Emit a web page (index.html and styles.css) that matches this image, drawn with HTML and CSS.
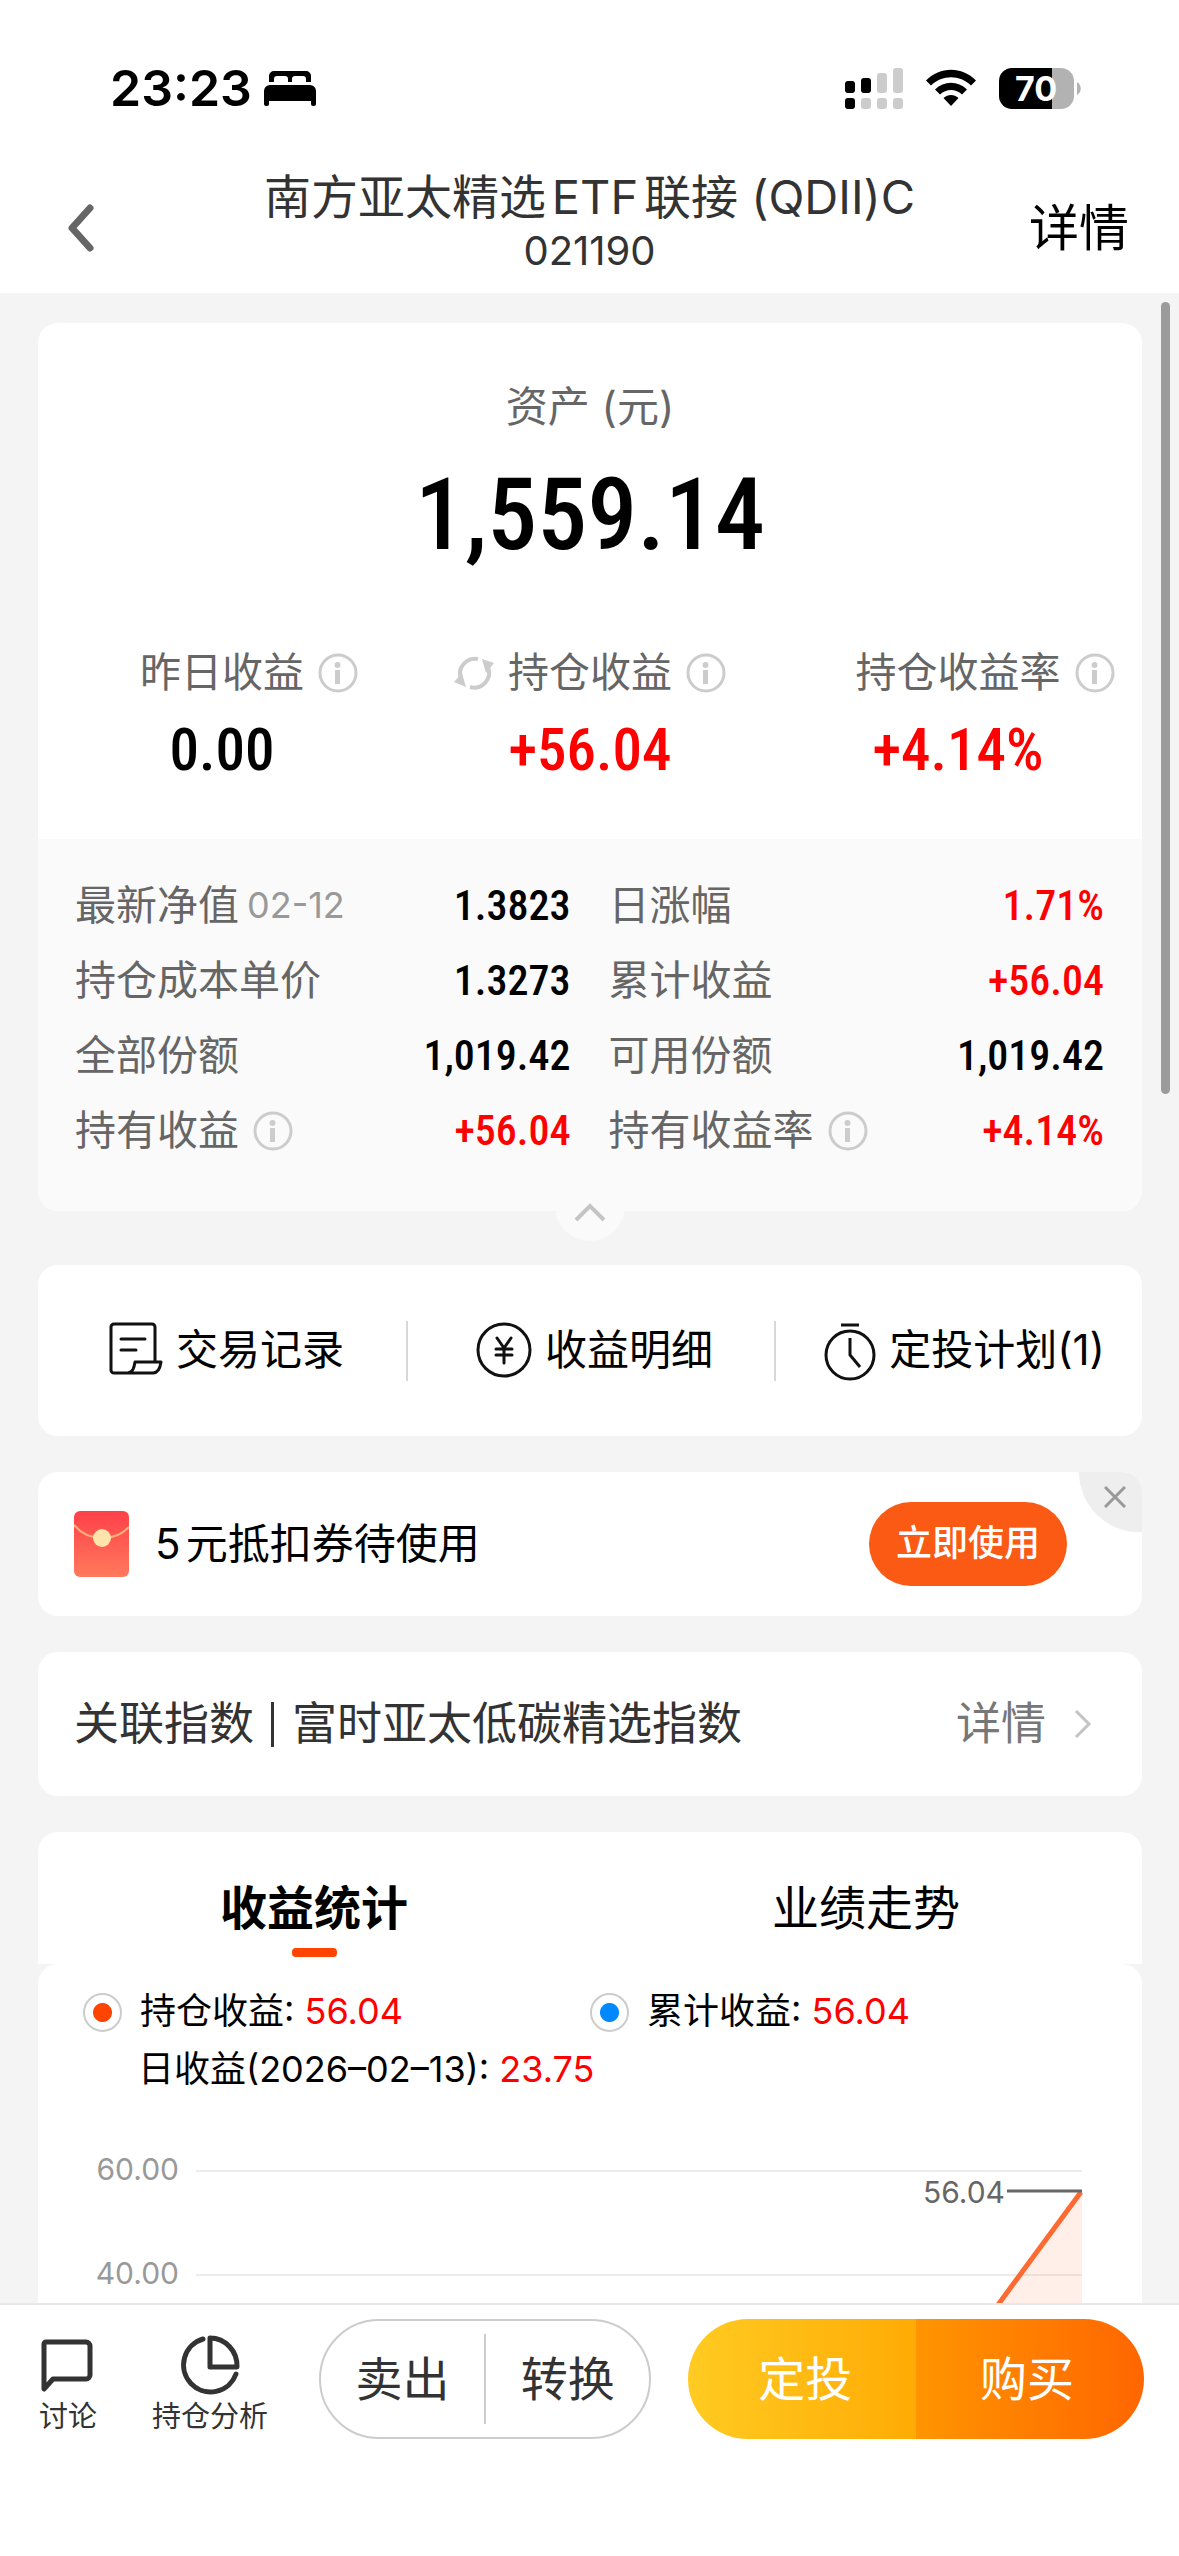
FILE: index.html
```html
<!DOCTYPE html>
<html lang="zh-CN">
<head>
<meta charset="utf-8">
<meta name="viewport" content="width=device-width, initial-scale=1">
<title>南方亚太精选ETF联接(QDII)C</title>
<link rel="stylesheet" href="styles.css">
</head>
<body>
<svg class="defs" aria-hidden="true">
  <symbol id="info" viewBox="0 0 40 40">
    <circle cx="20" cy="20" r="18" fill="none" stroke="#ccc" stroke-width="3"/>
    <rect x="17" y="17" width="5" height="14" fill="#ccc"/>
    <circle cx="19.500" cy="12" r="3" fill="#ccc"/>
  </symbol>
</svg>

<div class="status">
  <div class="status-time">
    <span>23:23</span>
    <svg width="52" height="36" viewBox="0 0 52 36" aria-hidden="true">
      <path d="M5 12V6a5 5 0 0 1 5-5h32a5 5 0 0 1 5 5v6h-5V9a3 3 0 0 0-3-3H31a3 3 0 0 0-3 3v3h-4V9a3 3 0 0 0-3-3h-8a3 3 0 0 0-3 3v3z"/>
      <path d="M0 21a6 6 0 0 1 6-6h40a6 6 0 0 1 6 6v13a2 2 0 0 1-2 2h-1a2 2 0 0 1-2-2v-3H5v3a2 2 0 0 1-2 2H2a2 2 0 0 1-2-2z"/>
    </svg>
  </div>
  <div class="status-icons">
    <svg width="58" height="41" viewBox="0 0 58 41" aria-hidden="true">
      <rect x="0" y="13" width="10" height="12" rx="3"/>
      <rect x="16" y="10" width="10" height="15" rx="3"/>
      <g fill="#ccc">
        <rect x="32" y="5" width="10" height="20" rx="3"/>
        <rect x="48" y="0" width="10" height="25" rx="3"/>
        <rect x="16" y="30" width="10" height="11" rx="3"/>
        <rect x="32" y="30" width="10" height="11" rx="3"/>
        <rect x="48" y="30" width="10" height="11" rx="3"/>
      </g>
      <rect x="0" y="30" width="10" height="11" rx="3"/>
    </svg>
    <svg width="52" height="38" viewBox="0 0 52 38" aria-hidden="true">
      <path d="M1 11.500C15-3 37-3 51 11.500l-5 5C35 5.500 17 5.500 6 16.500z"/>
      <path d="M10 20.500c9-9 23-9 32 0l-5 5c-6-6-16-6-22 0z"/>
      <path d="M18.500 29c4.500-4 10.500-4 15 0L26 37z"/>
    </svg>
    <svg width="82" height="41" viewBox="0 0 82 41" aria-label="电量 70">
      <path d="M53 0h9a13 13 0 0 1 13 13v15a13 13 0 0 1-13 13h-9z" fill="#b2b2b2"/>
      <path d="M13 0h40v41H13A13 13 0 0 1 0 28V13A13 13 0 0 1 13 0z"/>
      <path d="M78 14c5 3 5 10 0 13z" fill="#b2b2b2"/>
      <text class="battery-text" x="37" y="33" text-anchor="middle">70</text>
    </svg>
  </div>
</div>

<header class="header">
  <button class="back" aria-label="返回">
    <svg width="30" height="52" viewBox="0 0 30 52" fill="none" stroke="#666" stroke-width="7" stroke-linecap="round" stroke-linejoin="round" aria-hidden="true"><path d="M24 6 6 26l18 20"/></svg>
  </button>
  <div class="header-title">
    <h1>南方亚太精选ETF联接 (QDII)C</h1>
    <p>021190</p>
  </div>
  <a class="header-link" href="#detail">详情</a>
</header>

<main class="content">
  <section class="card assets">
    <div class="assets-top">
      <p class="assets-label">资产 (元)</p>
      <p class="assets-total">1,559.14</p>
      <div class="stats">
        <div class="stat">
          <div class="stat-label"><span></span><span>昨日收益</span><svg class="info" aria-hidden="true"><use href="#info"/></svg></div>
          <div class="stat-value">0.00</div>
        </div>
        <div class="stat">
          <div class="stat-label">
            <svg class="info swap" viewBox="0 0 40 40" aria-hidden="true">
              <g fill="none" stroke="#ccc" stroke-width="4">
                <path d="M7 26A15 15 0 0 1 24 6"/>
                <path d="M34 14A15 15 0 0 1 16 34"/>
              </g>
              <path d="M28 6l12 4-8 10zM12 34 0 29l8-9z" fill="#ccc"/>
            </svg>
            <span>持仓收益</span><svg class="info" aria-hidden="true"><use href="#info"/></svg>
          </div>
          <div class="stat-value up">+56.04</div>
        </div>
        <div class="stat">
          <div class="stat-label"><span></span><span>持仓收益率</span><svg class="info" aria-hidden="true"><use href="#info"/></svg></div>
          <div class="stat-value up">+4.14%</div>
        </div>
      </div>
    </div>
    <dl class="details">
      <div class="detail"><dt>最新净值<small>02-12</small></dt><dd>1.3823</dd></div>
      <div class="detail"><dt>日涨幅</dt><dd class="up">1.71%</dd></div>
      <div class="detail"><dt>持仓成本单价</dt><dd>1.3273</dd></div>
      <div class="detail"><dt>累计收益</dt><dd class="up">+56.04</dd></div>
      <div class="detail"><dt>全部份额</dt><dd>1,019.42</dd></div>
      <div class="detail"><dt>可用份额</dt><dd>1,019.42</dd></div>
      <div class="detail"><dt>持有收益<svg class="info" aria-hidden="true"><use href="#info"/></svg></dt><dd class="up">+56.04</dd></div>
      <div class="detail"><dt>持有收益率<svg class="info" aria-hidden="true"><use href="#info"/></svg></dt><dd class="up">+4.14%</dd></div>
    </dl>
    <button class="collapse" aria-label="收起">
      <svg width="32" height="20" viewBox="0 0 32 20" fill="none" stroke="#c4c4c4" stroke-width="4" aria-hidden="true"><path d="M2 18 16 4l14 14"/></svg>
    </button>
  </section>

  <nav class="card actions">
    <a href="#records">
      <svg width="66" height="66" viewBox="0 0 66 66" fill="none" stroke="#111" stroke-width="3" stroke-linejoin="round" stroke-linecap="round" aria-hidden="true">
        <path d="M55 44V9a3 3 0 0 0-3-3H14a3 3 0 0 0-3 3v43a3 3 0 0 0 3 3h39c5 0 7-4 8-11H35c-1 6-2 10-7 11"/>
        <path d="M21 21h24M21 32h15"/>
      </svg>
      <span>交易记录</span>
    </a>
    <a href="#income">
      <svg width="66" height="66" viewBox="0 0 66 66" fill="none" stroke="#111" stroke-width="3" stroke-linecap="round" aria-hidden="true">
        <circle cx="35" cy="32" r="26"/>
        <path d="M28 20l7 10 7-10M35 30v15M27 31h16M27 37h16"/>
      </svg>
      <span>收益明细</span>
    </a>
    <a href="#plan">
      <svg width="66" height="66" viewBox="0 0 66 66" fill="none" stroke="#111" stroke-width="3" aria-hidden="true">
        <circle cx="37" cy="37" r="24"/>
        <path d="M28 7h18M37 20v17l10 12"/>
      </svg>
      <span>定投计划(1)</span>
    </a>
  </nav>

  <section class="card coupon">
    <svg width="55" height="66" viewBox="0 0 55 66" aria-hidden="true">
      <defs><linearGradient id="env" x1="0" y1="0" x2="0" y2="1"><stop offset="0" stop-color="#ff4049"/><stop offset="1" stop-color="#ff7a5c"/></linearGradient></defs>
      <rect width="55" height="66" rx="6" fill="url(#env)"/>
      <path d="M0 14c14 17 41 17 55 2" fill="none" stroke="#ffb27c" stroke-width="2"/>
      <circle cx="28" cy="27" r="9" fill="#ffe3ab"/>
    </svg>
    <p>5元抵扣券待使用</p>
    <button class="use">立即使用</button>
    <button class="close" aria-label="关闭">
      <svg width="22" height="22" viewBox="0 0 22 22" stroke="#999" stroke-width="3" aria-hidden="true"><path d="M1 1l20 20M21 1 1 21"/></svg>
    </button>
  </section>

  <a class="card index" href="#index">
    <span>关联指数</span><i></i><span>富时亚太低碳精选指数</span>
    <span class="index-more">详情</span>
    <svg width="18" height="30" viewBox="0 0 18 30" fill="none" stroke="#c4c4c4" stroke-width="3" aria-hidden="true"><path d="M2 2l13 13L2 28"/></svg>
  </a>

  <section class="chart-card">
    <div class="tabs" role="tablist">
      <button class="tab active" role="tab" aria-selected="true">收益统计</button>
      <button class="tab" role="tab" aria-selected="false">业绩走势</button>
    </div>
    <div class="chart">
      <div class="legend">
        <div class="legend-item"><b class="dot"></b><span>持仓收益: <em>56.04</em></span></div>
        <div class="legend-item"><b class="dot blue"></b><span>累计收益: <em>56.04</em></span></div>
        <div class="legend-item daily"><span>日收益(2026–02–13): <em>23.75</em></span></div>
      </div>
      <svg class="plot" viewBox="0 0 1104 280" aria-label="收益曲线">
        <path d="M158 77h886M158 181h886" stroke="#ececec" stroke-width="2"/>
        <path d="M1044 98 V280 H909z" fill="#ff6a32" fill-opacity="0.110"/>
        <path d="M1043 98 L909 280" fill="none" stroke="#ff6a32" stroke-width="5"/>
        <path d="M969 97h75" stroke="#666" stroke-width="3"/>
        <g class="axis" text-anchor="end">
          <text x="141" y="86">60.00</text>
          <text x="141" y="190">40.00</text>
          <text class="mark" x="967" y="109">56.04</text>
        </g>
      </svg>
    </div>
  </section>
  <div class="scrollbar"></div>
</main>

<footer class="bar">
  <button class="bar-icon">
    <svg width="66" height="66" viewBox="0 0 66 66" fill="none" stroke="#333" stroke-width="5" stroke-linejoin="round" aria-hidden="true"><path d="M11 11h40a4 4 0 0 1 4 4v29a4 4 0 0 1-4 4H18L9 58V13a2 2 0 0 1 2-2z"/></svg>
    <span>讨论</span>
  </button>
  <button class="bar-icon">
    <svg width="66" height="66" viewBox="0 0 66 66" fill="none" stroke="#333" stroke-width="5" stroke-linecap="round" stroke-linejoin="round" aria-hidden="true"><path d="M26 8A27 27 0 1 0 59 43"/><path d="M33 7v29h27A27 28 0 0 0 33 7z"/></svg>
    <span>持仓分析</span>
  </button>
  <div class="pill outline">
    <button>卖出</button>
    <button>转换</button>
  </div>
  <div class="pill solid">
    <button class="invest">定投</button>
    <button class="buy">购买</button>
  </div>
</footer>
</body>
</html>
```

FILE: styles.css
```css
* {
  box-sizing: border-box;
  margin: 0;
  padding: 0;
}

body {
  display: flex;
  flex-direction: column;
  height: 100vh;
  background: #fff;
  color: #000;
  font-family: Inter, "Noto Sans CJK SC", sans-serif;
  font-size: 42px;
  line-height: 1.2;
  text-autospace: normal;
  overflow: hidden;
}

button {
  border: 0;
  background: none;
  color: inherit;
  font: inherit;
}

a {
  color: inherit;
  text-decoration: none;
}

svg {
  display: block;
  flex: none;
}

em,
i {
  font-style: normal;
}

.defs {
  position: absolute;
  width: 0;
  height: 0;
}

.up,
em {
  color: #f00;
}

/* Status bar */
.status {
  display: flex;
  flex: none;
  align-items: center;
  justify-content: space-between;
  height: 163px;
  padding: 13px 98px 0 110px;
}

.status-time,
.status-icons {
  display: flex;
  align-items: center;
}

.status-time {
  gap: 12px;
  font-size: 50px;
  font-weight: 600;
}

.status-icons {
  gap: 22px;
}

.battery-text {
  fill: #fff;
  font-size: 34px;
  font-weight: 700;
}

/* Header */
.header {
  display: grid;
  flex: none;
  grid-template-columns: 1fr auto 1fr;
  align-items: center;
  height: 130px;
  padding: 0 50px;
}

.back {
  justify-self: start;
  padding: 0 16px;
}

.header-title {
  padding: 0 0 8px;
  color: #333;
  text-align: center;
}

.header-title h1 {
  font-size: 47px;
  font-weight: 400;
  line-height: 54px;
}

.header-title p {
  font-size: 40px;
  line-height: 54px;
}

.header-link {
  justify-self: end;
  font-size: 50px;
}

/* Scrolling content */
.content {
  position: relative;
  display: flex;
  flex: 1;
  flex-direction: column;
  gap: 36px;
  min-height: 0;
  padding: 30px 37px 0 38px;
  background: #f4f4f4;
  overflow: hidden;
}

.content > * {
  flex: none;
}

.scrollbar {
  position: absolute;
  top: 9px;
  right: 9px;
  width: 9px;
  height: 792px;
  border-radius: 5px;
  background: #9b9b9b;
}

.card {
  border-radius: 20px;
  background: #fff;
}

/* Assets */
.assets {
  position: relative;
  margin-bottom: 18px;
}

.assets-top {
  padding: 54px 0 49px;
}

.assets-label {
  color: #666;
  line-height: 60px;
  text-align: center;
}

.assets-total,
.stat-value,
.detail dd {
  font-family: "Roboto Condensed", Roboto, sans-serif;
  font-weight: 500;
}

.assets-total {
  padding: 18px 0 60px;
  font-size: 100px;
  line-height: 120px;
  text-align: center;
}

.stats {
  display: grid;
  grid-template-columns: repeat(3, 1fr);
}

.stat-label {
  display: grid;
  grid-template-columns: 1fr auto 1fr;
  align-items: center;
  column-gap: 14px;
  color: #666;
  font-size: 41px;
  line-height: 75px;
}

.info {
  width: 40px;
  height: 40px;
}

.swap {
  justify-self: end;
}

.stat-value {
  font-size: 59px;
  line-height: 80px;
  text-align: center;
}

.details {
  display: grid;
  grid-template-columns: 1fr 1fr;
  column-gap: 38px;
  padding: 29px 38px 43px 37px;
  border-radius: 0 0 20px 20px;
  background: #fafafa;
}

.detail {
  display: flex;
  align-items: center;
  justify-content: space-between;
  line-height: 75px;
}

.detail dt {
  display: flex;
  align-items: center;
  gap: 14px;
  color: #666;
  font-size: 41px;
}

.detail small {
  margin-left: -6px;
  color: #999;
  font-size: 36px;
}

.detail dd {
  font-size: 42px;
}

.collapse {
  position: absolute;
  bottom: -30px;
  left: 50%;
  display: flex;
  align-items: center;
  justify-content: center;
  width: 70px;
  height: 70px;
  margin-left: -35px;
  padding-top: 12px;
  border-radius: 50%;
  background: #fafafa;
}

/* Shortcuts */
.actions {
  display: grid;
  grid-template-columns: repeat(3, 1fr);
  align-items: center;
  height: 171px;
}

.actions a {
  display: flex;
  align-items: center;
  justify-content: center;
  gap: 10px;
  height: 60px;
}

.actions a + a {
  border-left: 2px solid #d8d8d8;
}

/* Coupon */
.coupon {
  position: relative;
  display: flex;
  align-items: center;
  gap: 26px;
  height: 144px;
  padding: 0 75px 0 36px;
  overflow: hidden;
}

.use {
  width: 198px;
  height: 84px;
  margin-left: auto;
  border-radius: 42px;
  background: #fb5a14;
  color: #fff;
  font-size: 36px;
  font-weight: 500;
}

.close {
  position: absolute;
  top: 0;
  right: 0;
  display: flex;
  align-items: center;
  justify-content: center;
  width: 63px;
  height: 60px;
  padding: 0 0 10px 8px;
  border-radius: 0 0 0 60px;
  background: #eee;
}

/* Related index */
.index {
  display: flex;
  align-items: center;
  height: 144px;
  padding: 0 50px 0 36px;
  color: #333;
  font-size: 45px;
}

.index i {
  width: 3px;
  height: 45px;
  margin: 0 18px 0 17px;
  background: #333;
}

.index-more {
  margin: 0 28px 0 auto;
  color: #777;
}

/* Income statistics */
.tabs {
  display: grid;
  grid-template-columns: 1fr 1fr;
  border-radius: 20px 20px 0 0;
  background: #fff;
}

.tab {
  display: flex;
  flex-direction: column;
  align-items: center;
  height: 132px;
  padding-top: 41px;
  font-size: 47px;
  line-height: 70px;
}

.active {
  font-weight: 700;
}

.active::after {
  width: 45px;
  height: 9px;
  margin-top: 5px;
  border-radius: 4px;
  background: #ff4400;
  content: "";
}

.chart {
  border-radius: 20px 20px 0 0;
  background: #fff;
}

.legend {
  display: grid;
  grid-template-columns: 1fr 1fr;
  row-gap: 10px;
  padding: 24px 45px 0;
  font-size: 36px;
  text-autospace: no-autospace;
}

.legend-item {
  display: flex;
  align-items: center;
  gap: 18px;
  height: 48px;
}

.daily {
  grid-column: 1 / -1;
  padding-left: 55px;
}

.dot {
  width: 39px;
  height: 39px;
  border: 2px solid #ccc;
  border-radius: 50%;
  background: radial-gradient(circle, #ff4400 9px, #fff 10px);
}

.blue {
  background: radial-gradient(circle, #0088ff 9px, #fff 10px);
}

.plot {
  width: 100%;
}

.axis {
  fill: #999;
  font-size: 30px;
}

.mark {
  fill: #666;
}

/* Bottom bar */
.bar {
  display: flex;
  flex: none;
  align-items: flex-start;
  padding: 14px 35px 117px;
  border-top: 2px solid #e8e8e8;
  color: #333;
}

.bar-icon {
  display: flex;
  flex-direction: column;
  align-items: center;
  margin-right: 51px;
  padding-top: 12px;
  font-size: 29px;
  line-height: 40px;
}

.pill {
  display: flex;
  height: 120px;
  border-radius: 60px;
  font-size: 47px;
  overflow: hidden;
}

.pill button {
  flex: 1;
}

.outline {
  flex: 330;
  align-items: center;
  margin-right: 37px;
  border: 2px solid #ccc;
}

.outline button {
  height: 90px;
}

.outline button + button {
  border-left: 2px solid #ccc;
}

.solid {
  flex: 458;
  color: #fff;
}

.pill .invest {
  padding-left: 6px;
  background: linear-gradient(90deg, #ffcb22, #ffab04);
}

.pill .buy {
  padding-right: 6px;
  background: linear-gradient(90deg, #ff9500, #ff6600);
}
```
